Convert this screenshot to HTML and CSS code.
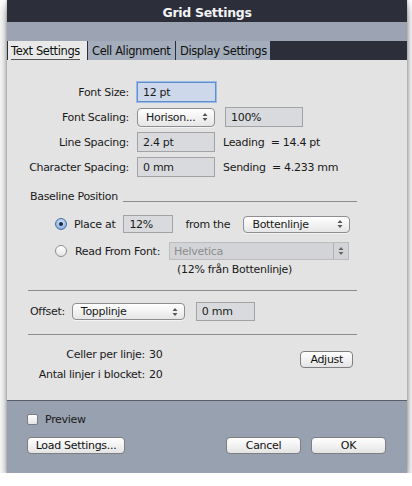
FILE: index.html
```html
<!DOCTYPE html>
<html>
<head>
<meta charset="utf-8">
<title>Grid Settings</title>
<link rel="stylesheet" href="styles.css">
</head>
<body>
<div class="window">
  <div class="titlebar">Grid Settings</div>
  <div class="band"></div>
  <div class="tabs">
    <div class="tab active"><span>Text Settings</span></div>
    <div class="tab">Cell Alignment</div>
    <div class="tab">Display Settings</div>
  </div>
  <div class="content">
    <div class="form">
      <div class="row">
        <span class="lbl">Font Size:</span>
        <div class="field focus w79">12 pt</div>
      </div>
      <div class="row">
        <span class="lbl">Font Scaling:</span>
        <div class="popup w78">Horison...<svg class="arr" viewBox="0 0 6 10" width="6" height="10"><path d="M0.5 4 L3 1 L5.5 4 Z M0.5 6 L3 9 L5.5 6 Z" fill="#555"/></svg></div>
        <div class="field w78 gap10">100%</div>
      </div>
      <div class="row">
        <span class="lbl">Line Spacing:</span>
        <div class="field w78">2.4 pt</div>
        <span class="calc">Leading  = 14.4 pt</span>
      </div>
      <div class="row">
        <span class="lbl">Character Spacing:</span>
        <div class="field w78">0 mm</div>
        <span class="calc">Sending  = 4.233 mm</span>
      </div>
    </div>

    <div class="group-head">
      <span>Baseline Position</span>
      <div class="line"></div>
    </div>

    <div class="radio-row r1">
      <span class="radio on"><span class="dot"></span></span>
      <span class="rtext">Place at</span>
      <div class="field small w50">12%</div>
      <span class="from">from the</span>
      <div class="popup w107 pop-small">Bottenlinje<svg class="arr" viewBox="0 0 6 10" width="6" height="10"><path d="M0.5 4 L3 1 L5.5 4 Z M0.5 6 L3 9 L5.5 6 Z" fill="#555"/></svg></div>
    </div>
    <div class="radio-row r2">
      <span class="radio"></span>
      <span class="rtext">Read From Font:</span>
      <div class="dpopup"><span class="dval">Helvetica</span><span class="dbtn"><svg viewBox="0 0 6 10" width="6" height="10"><path d="M0.5 4 L3 1 L5.5 4 Z M0.5 6 L3 9 L5.5 6 Z" fill="#666"/></svg></span></div>
    </div>
    <div class="note">(12% från Bottenlinje)</div>

    <div class="sep s1"></div>

    <div class="offset-row">
      <span class="otext">Offset:</span>
      <div class="popup w113 pop-small">Topplinje<svg class="arr" viewBox="0 0 6 10" width="6" height="10"><path d="M0.5 4 L3 1 L5.5 4 Z M0.5 6 L3 9 L5.5 6 Z" fill="#555"/></svg></div>
      <div class="field w59 gap11">0 mm</div>
    </div>

    <div class="sep s2"></div>

    <div class="info">
      <div class="stats">
        <div class="stat"><span class="slbl">Celler per linje:</span><span class="sval">30</span></div>
        <div class="stat"><span class="slbl">Antal linjer i blocket:</span><span class="sval">20</span></div>
      </div>
      <div class="btn adjust">Adjust</div>
    </div>
  </div>
  <div class="footer">
    <div class="check-row"><span class="check"></span><span>Preview</span></div>
    <div class="btn-row">
      <div class="btn load">Load Settings...</div>
      <div class="spacer"></div>
      <div class="btn cancel">Cancel</div>
      <div class="btn ok">OK</div>
    </div>
  </div>
</div>
</body>
</html>
```

FILE: styles.css
```css
* { box-sizing: border-box; }
html, body { margin: 0; padding: 0; background: #ffffff; }
body {
  font-family: "DejaVu Sans", "Liberation Sans", sans-serif;
  font-size: 11px;
  letter-spacing: -0.3px;
  color: #1a1a1a;
}
.window {
  width: 400px;
  margin-left: 7px;
  box-shadow: 0 6px 10px rgba(0,0,0,0.45), 0 0 3px rgba(0,0,0,0.3);
}
.titlebar {
  height: 22px;
  background: #2c2e3a;
  color: #f4f4f6;
  font-weight: bold;
  font-size: 12.5px;
  letter-spacing: -0.3px;
  display: flex;
  align-items: center;
  justify-content: center;
  padding-top: 3px;
}
.band { height: 19px; background: #9ca4b3; }
.tabs {
  height: 19px;
  background: #2c2e3a;
  display: flex;
  align-items: stretch;
  padding-left: 1px;
}
.tab {
  background: #a4adbb;
  color: #111;
  font-size: 11.5px;
  letter-spacing: -0.4px;
  white-space: nowrap;
  overflow: hidden;
  padding: 3px 0 0 4px;
  margin-right: 1px;
}
.tab:nth-child(2) { width: 87px; }
.tab:nth-child(3) { width: 94px; }
.tab.active {
  background: #e9e9e9;
  width: 79px;
  padding-left: 3px;
}
.tab.active span {
  display: inline-block;
  border-bottom: 1px solid #555;
  padding-bottom: 1px;
  line-height: 13px;
}
.content {
  background: #e3e3e3;
  height: 340px;
  padding: 22px 0 0 21px;
}
.form { display: flex; flex-direction: column; gap: 5px; }
.row { display: flex; align-items: center; height: 20px; }
.lbl { width: 101px; text-align: right; margin-right: 8px; }
.field {
  height: 20px;
  background: #d8dade;
  border: 1px solid #a3a3a6;
  padding: 0 0 0 5px;
  display: flex;
  align-items: center;
}
.field.focus {
  background: #cdd8ea;
  border: 1px solid #5f8fd0;
  box-shadow: 0 0 0 1px #9bbbe6;
}
.w79 { width: 79px; }
.w78 { width: 78px; }
.w50 { width: 50px; }
.w59 { width: 59px; }
.gap10 { margin-left: 10px; }
.gap11 { margin-left: 11px; }
.field.small { height: 18px; }
.popup {
  height: 19px;
  border: 1px solid #8e8e92;
  border-radius: 4px;
  background: linear-gradient(#ffffff, #f0f0f0 60%, #e6e6e6);
  display: flex;
  align-items: center;
  padding: 0 6px 0 8px;
  justify-content: space-between;
  box-shadow: 0 1px 0 rgba(255,255,255,0.6);
}
.pop-small { height: 17px; }
.w107 { width: 107px; }
.w113 { width: 113px; }
.calc { white-space: pre; margin-left: 8px; }
.group-head {
  display: flex;
  align-items: center;
  margin-top: 12px;
  height: 14px;
  padding-left: 2px;
  width: 329px;
}
.group-head .line {
  flex: 1;
  height: 1px;
  background: #8c8c8c;
  margin-left: 5px;
  margin-top: 10px;
}
.radio-row { display: flex; align-items: center; height: 18px; padding-left: 27px; }
.r1 { margin-top: 12px; }
.r2 { margin-top: 9px; }
.radio {
  width: 12px; height: 12px;
  border-radius: 50%;
  border: 1px solid #8f8f8f;
  background: linear-gradient(#ffffff, #e5e5e5);
  display: flex; align-items: center; justify-content: center;
}
.radio.on {
  border-color: #4d6f9f;
  background: radial-gradient(circle at 50% 35%, #d6e6fa, #8fb3e3 70%, #6f97d0);
}
.radio .dot { width: 4px; height: 4px; border-radius: 50%; background: #1d2a3f; }
.rtext { margin-left: 7px; }
.r1 .field { margin-left: 8px; }
.from { margin-left: 12px; width: 58px; }
.r2 .rtext { margin-left: 8px; }
.dpopup {
  margin-left: 9px;
  width: 180px;
  height: 18px;
  background: #d3d4d7;
  border: 1px solid #bcbcbe;
  display: flex;
  align-items: stretch;
}
.dval { flex: 1; color: #8c8c8e; padding-left: 4px; display: flex; align-items: center; }
.dbtn {
  width: 15px;
  border-left: 1px solid #b0b0b2;
  display: flex; align-items: center; justify-content: center;
}
.note { margin-top: 3px; padding-left: 149px; height: 14px; line-height: 14px; }
.sep { width: 329px; height: 1px; background: #8c8c8c; }
.s1 { margin-top: 13px; }
.offset-row { display: flex; align-items: center; height: 19px; margin-top: 11px; padding-left: 2px; }
.otext { margin-right: 7px; }
.offset-row .field { height: 19px; }
.s2 { margin-top: 13px; }
.info { display: flex; width: 325px; margin-top: 10px; align-items: flex-start; }
.stats { display: flex; flex-direction: column; }
.stat { display: flex; height: 19.5px; align-items: center; }
.slbl { width: 117px; text-align: right; }
.sval { margin-left: 4px; }
.btn {
  height: 17px;
  border: 1px solid #7f7f83;
  border-radius: 4px;
  background: linear-gradient(#ffffff, #f1f1f1 55%, #e3e3e3);
  display: flex; align-items: center; justify-content: center;
  color: #111;
}
.adjust { width: 70px; margin-left: 138px; margin-top: 6px; }
.footer {
  height: 73px;
  background: #98a1b0;
  border-top: 1px solid #595d68;
  padding: 12px 21px 0 20px;
}
.check-row { display: flex; align-items: center; height: 12px; }
.check {
  width: 11px; height: 11px;
  border: 1px solid #7d7d80;
  border-radius: 2px;
  background: linear-gradient(#ffffff, #e4e4e4);
  margin-right: 7px;
}
.btn-row { display: flex; margin-top: 12px; height: 17px; }
.load { width: 98px; }
.spacer { flex: 1; }
.cancel { width: 75px; margin-right: 10px; }
.ok { width: 75px; }
```
